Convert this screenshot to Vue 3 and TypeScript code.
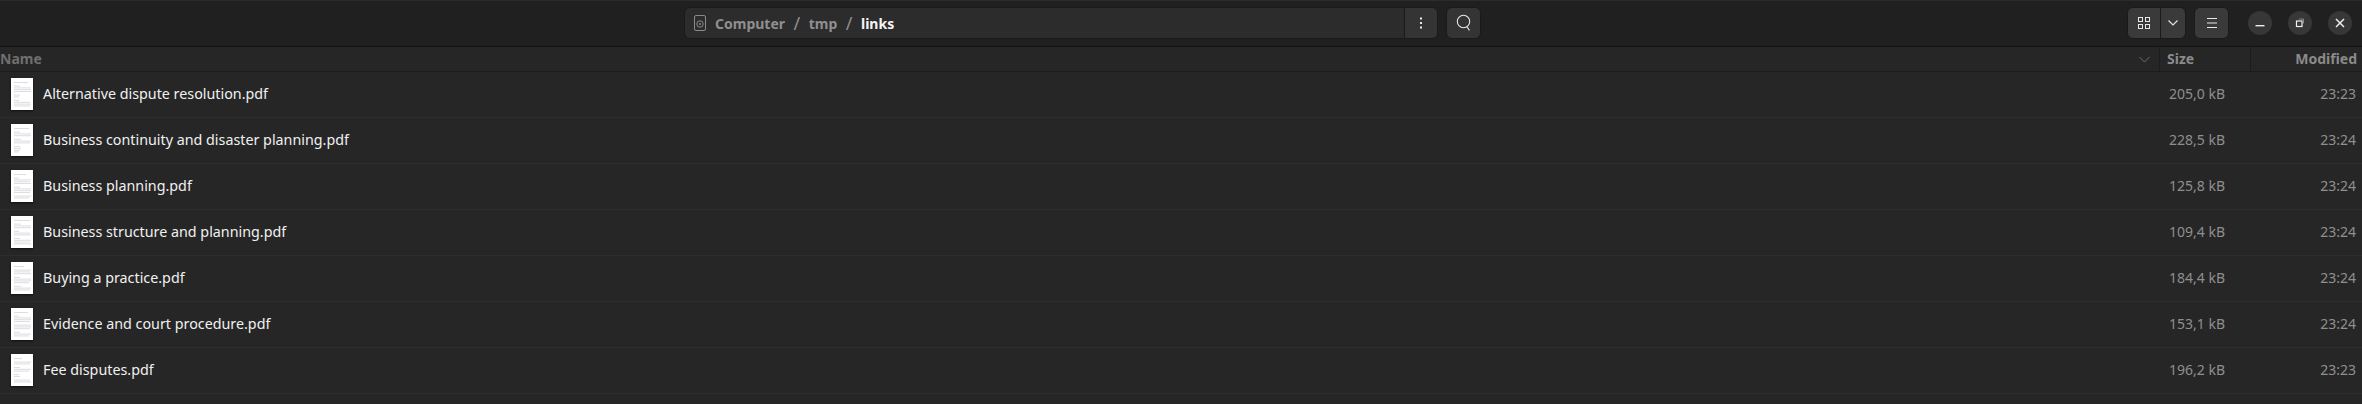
<script setup lang="ts">
interface FileRow {
  name: string
  size: string
  modified: string
  lines: number[]
}

const files: FileRow[] = [
  { name: 'Alternative dispute resolution.pdf', size: '205,0 kB', modified: '23:23', lines: [14, 0, 6, 17, 17, 17, 0, 6, 5, 0, 5, 16, 17, 16] },
  { name: 'Business continuity and disaster planning.pdf', size: '228,5 kB', modified: '23:24', lines: [15, 0, 6, 17, 17, 0, 7, 17, 16, 0, 6, 7, 6, 5] },
  { name: 'Business planning.pdf', size: '125,8 kB', modified: '23:24', lines: [12, 0, 5, 17, 16, 17, 0, 6, 17, 17, 16, 0, 17, 15] },
  { name: 'Business structure and planning.pdf', size: '109,4 kB', modified: '23:24', lines: [16, 0, 7, 17, 17, 0, 5, 16, 17, 0, 6, 17, 16, 17] },
  { name: 'Buying a practice.pdf', size: '184,4 kB', modified: '23:24', lines: [10, 0, 17, 16, 17, 0, 6, 17, 17, 15, 0, 7, 17, 16] },
  { name: 'Evidence and court procedure.pdf', size: '153,1 kB', modified: '23:24', lines: [14, 0, 5, 17, 17, 16, 0, 17, 17, 16, 0, 6, 17, 15] },
  { name: 'Fee disputes.pdf', size: '196,2 kB', modified: '23:23', lines: [8, 0, 17, 16, 0, 6, 17, 15, 0, 5, 6, 0, 16, 17] },
]
</script>

<template>
  <div class="window">
    <header class="headerbar">
      <div class="pathbar">
        <div class="crumbs">
          <svg class="drive" width="12" height="16" viewBox="0 0 12 16" fill="none">
            <rect x="0.5" y="0.5" width="11" height="15" rx="1.5" stroke="#8a8a8a" />
            <circle cx="6" cy="9" r="3.2" stroke="#8a8a8a" />
            <circle cx="6" cy="9" r="1" fill="#8a8a8a" />
          </svg>
          <span class="crumb">Computer</span>
          <span class="slash">/</span>
          <span class="crumb">tmp</span>
          <span class="slash">/</span>
          <span class="crumb current">links</span>
        </div>
        <button class="path-menu">
          <svg width="16" height="16" viewBox="0 0 16 16" fill="#e8e8e8">
            <rect x="7" y="2.5" width="2" height="2" />
            <rect x="7" y="7" width="2" height="2" />
            <rect x="7" y="11.5" width="2" height="2" />
          </svg>
        </button>
      </div>
      <button class="btn search">
        <svg width="18" height="18" viewBox="0 0 18 18" fill="none" stroke="#e8e8e8" stroke-width="1.1">
          <circle cx="8.5" cy="7.5" r="6.2" />
          <path d="M12 12.8l2.4 3.6" />
        </svg>
      </button>
      <div class="spacer" />
      <div class="view-toggle">
        <button class="toggle-main">
          <svg width="14" height="14" viewBox="0 0 14 14" fill="none" stroke="#e8e8e8">
            <rect x="1.5" y="1.5" width="4" height="4" />
            <rect x="8.5" y="1.5" width="4" height="4" />
            <rect x="1.5" y="8.5" width="4" height="4" />
            <rect x="8.5" y="8.5" width="4" height="4" />
          </svg>
        </button>
        <button class="toggle-arrow">
          <svg width="12" height="8" viewBox="0 0 12 8" fill="none" stroke="#e8e8e8" stroke-width="1.1">
            <path d="M1.5 1.5l4.5 4.5 4.5-4.5" />
          </svg>
        </button>
      </div>
      <button class="btn menu">
        <svg width="12" height="12" viewBox="0 0 12 12" fill="none" stroke="#e8e8e8">
          <path d="M1 1.5h10M1 6h10M1 10.5h10" />
        </svg>
      </button>
      <div class="window-controls">
        <button class="win-btn">
          <svg width="10" height="10" viewBox="0 0 10 10" fill="#eee">
            <rect x="0.5" y="7" width="9" height="1.4" />
          </svg>
        </button>
        <button class="win-btn">
          <svg width="10" height="10" viewBox="0 0 10 10" fill="none" stroke="#eee">
            <rect x="1.5" y="3" width="5.5" height="5.5" stroke-width="1.2" />
            <path d="M4 1h4.5v4.5" stroke-width="0.7" stroke="#aaa" />
          </svg>
        </button>
        <button class="win-btn">
          <svg width="10" height="10" viewBox="0 0 10 10" fill="none" stroke="#eee" stroke-width="1.5">
            <path d="M1 1l8 8M9 1l-8 8" />
          </svg>
        </button>
      </div>
    </header>

    <div class="columns row-grid">
      <div class="col-name">
        <span>Name</span>
        <svg width="11" height="7" viewBox="0 0 11 7" fill="none" stroke="#6d6d6d">
          <path d="M0.5 1l5 5 5-5" />
        </svg>
      </div>
      <div class="col-size">Size</div>
      <div class="col-mod">Modified</div>
    </div>

    <div class="file-list">
      <div v-for="f in files" :key="f.name" class="file row-grid">
        <div class="file-name">
          <svg class="thumb" width="22" height="32" viewBox="0 0 22 32">
            <rect width="22" height="32" fill="#fff" />
            <rect
              v-for="(w, i) in f.lines"
              :key="i"
              x="3"
              :y="4 + i * 1.8"
              :width="w"
              height="1"
              :fill="w ? '#dcdce2' : 'none'"
            />
          </svg>
          <span>{{ f.name }}</span>
        </div>
        <div class="file-size">{{ f.size }}</div>
        <div class="file-mod">{{ f.modified }}</div>
      </div>
    </div>
  </div>
</template>

<style>
html,
body {
  margin: 0;
  height: 404px;
  overflow: hidden;
  background: #262626;
}
</style>

<style scoped>
.window {
  width: 2362px;
  height: 404px;
  overflow: hidden;
  background: #262626;
  font-family: "Noto Sans", "Open Sans", sans-serif;
  font-size: 14.3px;
  color: #f0f0f0;
}

button {
  border: 0;
  padding: 0;
  margin: 0;
  display: flex;
  align-items: center;
  justify-content: center;
  background: transparent;
}

.headerbar {
  box-sizing: border-box;
  height: 47px;
  padding: 6px 0 7px 684px;
  display: flex;
  align-items: flex-start;
  background: #202020;
  border-top: 1px solid #2b2b2b;
  border-bottom: 1px solid #111;
}

.pathbar {
  box-sizing: border-box;
  width: 754px;
  height: 32px;
  display: flex;
  background: #2c2c2c;
  border: 1px solid #1a1a1a;
  border-radius: 6px;
}

.crumbs {
  flex: 1;
  display: flex;
  align-items: center;
  padding-left: 9px;
  font-weight: 700;
  font-size: 14px;
  color: #8f8f8f;
}

.drive {
  margin-right: 9px;
}

.slash {
  margin: 0 8.5px;
  font-weight: 400;
  font-size: 18px;
}

.current {
  color: #f4f4f4;
}

.path-menu {
  width: 33px;
  height: 30px;
  background: #343434;
  border-left: 1px solid #1a1a1a;
  border-radius: 0 5px 5px 0;
}

.btn {
  box-sizing: border-box;
  height: 32px;
  width: 35px;
  background: #343434;
  border: 1px solid #1a1a1a;
  border-radius: 6px;
}

.search {
  margin-left: 8px;
}

.spacer {
  flex: 1;
}

.view-toggle {
  box-sizing: border-box;
  width: 59px;
  height: 32px;
  display: flex;
  background: #3a3a3a;
  border: 1px solid #1a1a1a;
  border-radius: 6px;
}

.toggle-main {
  width: 33px;
  border-right: 1px solid #1a1a1a;
}

.toggle-arrow {
  flex: 1;
}

.menu {
  margin-left: 8px;
  background: #3a3a3a;
}

.window-controls {
  display: flex;
  gap: 16px;
  margin: 4px 10px 0 19px;
}

.win-btn {
  width: 24px;
  height: 24px;
  border-radius: 50%;
  background: #373737;
}

.row-grid {
  display: grid;
  grid-template-columns: 2160px 91px 111px;
}

.columns {
  box-sizing: border-box;
  height: 25px;
  align-items: stretch;
  border-bottom: 1px solid #1c1c1c;
  font-weight: 700;
  font-size: 14px;
  line-height: 24px;
}

.col-name {
  display: flex;
  align-items: center;
  justify-content: space-between;
  padding-right: 9px;
  color: #6f6f6f;
  border-right: 1px solid #1c1c1c;
}

.col-size {
  padding-left: 7px;
  color: #8a8a8a;
  border-right: 1px solid #1c1c1c;
}

.col-mod {
  text-align: right;
  padding-right: 5px;
  color: #8a8a8a;
}

.file {
  box-sizing: border-box;
  height: 46px;
  padding-bottom: 1px;
  align-items: center;
  border-bottom: 1px solid #2d2d2d;
}

.file-name {
  display: flex;
  align-items: center;
  padding-left: 11px;
  gap: 10px;
}

.file-name span,
.file-size,
.file-mod {
  padding-bottom: 2px;
}

.thumb {
  flex: none;
  box-shadow: 0 1px 2px rgba(0, 0, 0, 0.6);
}

.file-size {
  padding-left: 9px;
  color: #8f8f8f;
  font-size: 14px;
}

.file-mod {
  text-align: right;
  padding-right: 6px;
  color: #8f8f8f;
  font-size: 14px;
}
</style>
